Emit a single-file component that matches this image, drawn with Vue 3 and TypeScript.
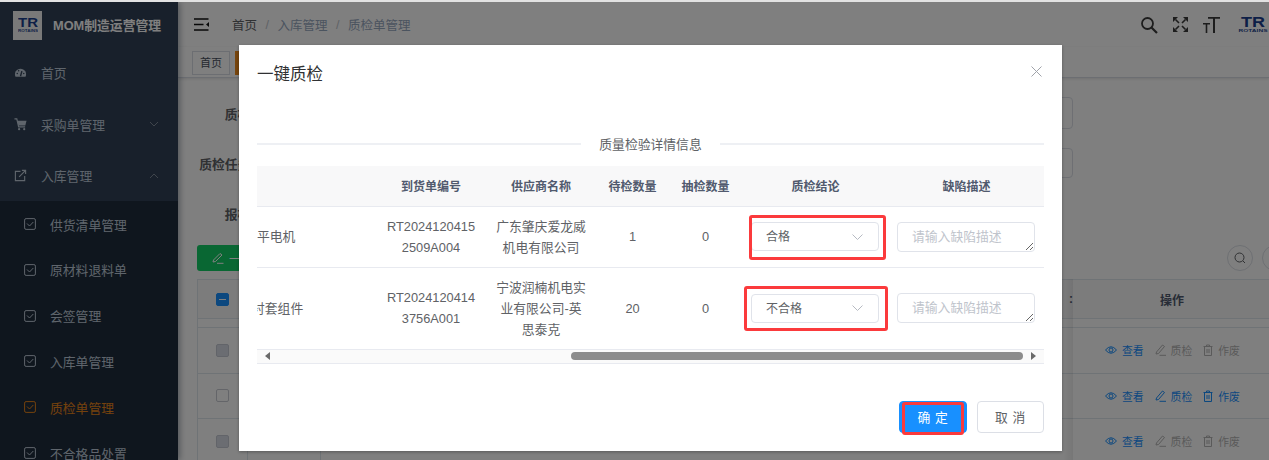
<script setup lang="ts">
const subMenus = [
  { name: '供货清单管理', active: false },
  { name: '原材料退料单', active: false },
  { name: '会签管理', active: false },
  { name: '入库单管理', active: false },
  { name: '质检单管理', active: true },
  { name: '不合格品处置', active: false },
]
const bgRows = [
  { disabled: true, active: false },
  { disabled: false, active: true },
  { disabled: true, active: false },
]
const inspectRows = [
  { name: '平电机', shift: 0, no: 'RT20241204152509A004', supplier: '广东肇庆爱龙威机电有限公司', pending: 1, sample: 0, result: '合格', height: 61, mark: 'mark-one' },
  { name: '衬套组件', shift: -5, no: 'RT20241204143756A001', supplier: '宁波润楠机电实业有限公司-英思泰克', pending: 20, sample: 0, result: '不合格', height: 82, mark: 'mark-two' },
]
</script>

<template>
  <div class="page">
    <div class="strip"></div>
    <div class="stage">
      <aside class="sidebar">
        <div class="brand">
          <div class="brand-logo">
            <svg width="20" height="15" viewBox="0 0 20 15">
              <text x="10" y="9" text-anchor="middle" class="logo-tr" textLength="20" lengthAdjust="spacingAndGlyphs">TR</text>
              <text x="10" y="14" text-anchor="middle" class="logo-sub" textLength="20" lengthAdjust="spacingAndGlyphs">ROTAINS</text>
            </svg>
          </div>
          <span class="brand-title">MOM制造运营管理</span>
        </div>
        <div class="top-item">
          <svg class="top-icon" viewBox="0 0 14 14">
            <path d="M1.600 11.500a6 6 0 1 1 10.800 0z" fill="#bfcbd9" />
            <path d="M7 11 8.500 5.500" stroke="#304156" stroke-width="1.500" />
            <circle cx="3.500" cy="8" r=".8" fill="#304156" /><circle cx="5" cy="5" r=".8" fill="#304156" /><circle cx="10.500" cy="8" r=".8" fill="#304156" />
          </svg>
          <span>首页</span>
        </div>
        <div class="top-item">
          <svg class="top-icon" viewBox="0 0 14 14">
            <path d="M.5 1h2.500L5 9.500h7" stroke="#bfcbd9" stroke-width="1.300" fill="none" />
            <path d="M3.500 3H13.500L12.200 8H4.800z" fill="#bfcbd9" />
            <circle cx="5.500" cy="12" r="1.200" fill="#bfcbd9" /><circle cx="11" cy="12" r="1.200" fill="#bfcbd9" />
          </svg>
          <span>采购单管理</span>
          <svg class="chev" viewBox="0 0 10 6"><path d="M1 1l4 4 4-4" /></svg>
        </div>
        <div class="top-item">
          <svg class="top-icon" viewBox="0 0 14 14">
            <path d="M7 2.500H1.500v10h10V7.500M5.500 8.500 12.500 1.500M8.500 1.500h4v4" stroke="#bfcbd9" stroke-width="1.200" fill="none" />
          </svg>
          <span>入库管理</span>
          <svg class="chev" viewBox="0 0 10 6"><path d="M1 5l4-4 4 4" /></svg>
        </div>
        <div class="submenu">
          <div v-for="m in subMenus" :key="m.name" class="sub-item" :class="{ active: m.active }">
            <svg class="sub-icon" viewBox="0 0 12 12">
              <rect x=".6" y=".6" width="10.800" height="10.800" rx="1.500" />
              <path d="M3 5.500l2.500 2.500 3.800-4" />
            </svg>
            <span>{{ m.name }}</span>
          </div>
        </div>
      </aside>

      <main class="main">
        <header class="topbar">
          <svg class="hamburger" width="15" height="13" viewBox="0 0 15 13">
            <path d="M0 1h14.500M0 6.500h9.500M0 12h14.500" stroke="#111" stroke-width="1.500" />
            <path d="M15 4v5l-3-2.500z" fill="#111" />
          </svg>
          <nav class="crumbs">
            <span class="crumb-home">首页</span><i>/</i><span>入库管理</span><i>/</i><span>质检单管理</span>
          </nav>
          <div class="top-tools">
            <svg width="18" height="18" viewBox="0 0 18 18"><circle cx="7.500" cy="7.500" r="5.500" /><path d="M11.500 11.500 17 17" stroke-width="2.200" /></svg>
            <svg width="17" height="17" viewBox="0 0 17 17">
              <path class="solid" d="M1 1h5L1 6zM16 1v5L11 1zM1 16v-5l5 5zM16 16h-5l5-5z" />
              <path class="tail" d="M3.500 3.500 7 7M13.500 3.500 10 7M3.500 13.500 7 10M13.500 13.500 10 10" />
            </svg>
            <svg width="17" height="18" viewBox="0 0 17 18"><path class="solid" d="M0 7h7v1.500H4.300V17H2.700V8.500H0zM5 1h12v1.700h-5V17h-2V2.700H5z" /></svg>
            <svg class="tool-logo" width="30" height="17" viewBox="0 0 30 17">
              <text x="15" y="11" text-anchor="middle" class="logo-tr logo-big" textLength="24" lengthAdjust="spacingAndGlyphs">TR</text>
              <text x="15" y="16" text-anchor="middle" class="logo-sub" textLength="29" lengthAdjust="spacingAndGlyphs">ROTAINS</text>
            </svg>
          </div>
        </header>
        <div class="tags">
          <span class="tag">首页</span>
          <span class="tag tag-on">质检单管理</span>
        </div>
        <section class="content">
          <div class="form-row first-row">
            <label>质检单号</label><div class="fake-input"></div>
          </div>
          <div class="form-row second-row">
            <label>质检任务编号</label><div class="fake-input short"></div>
          </div>
          <div class="form-row third-row"><label>报检日期</label></div>
          <div class="toolbar">
            <span class="green-btn">
              <svg width="12" height="12" viewBox="0 0 12 12"><path d="M1.500 8 8 1.500l2 1.500-6.500 6.500-2.500.5zM5 11.300h6.500" /></svg>
              一键质检
            </span>
            <div class="round-group">
              <span class="round"><svg width="12" height="12" viewBox="0 0 12 12"><circle cx="5.500" cy="5.500" r="4.500" /><path d="M9 9l2 2" /></svg></span>
              <span class="round"></span>
            </div>
          </div>
          <div class="bg-table">
            <div class="bg-head">
              <span class="check check-on"></span>
              <span class="colon">:</span>
              <span class="ops-title">操作</span>
            </div>
            <div v-for="(r, i) in bgRows" :key="i" class="bg-row">
              <span class="check" :class="{ 'check-off': r.disabled }"></span>
              <span class="cut cut-a"></span><span class="cut cut-b"></span>
              <div class="ops">
                <span class="op">
                  <svg width="12" height="12" viewBox="0 0 12 12"><path d="M.5 6Q6-.5 11.500 6 6 12.500.5 6z" /><circle cx="6" cy="6" r="2" /></svg>查看
                </span>
                <span class="op" :class="{ off: r.disabled }">
                  <svg width="11" height="12" viewBox="0 0 11 12"><path d="M1.500 8 7.500 1l2 1.500-6 7-2.500.5zM4.500 11.300H11" /></svg>质检
                </span>
                <span class="op" :class="{ off: r.disabled }">
                  <svg width="10" height="12" viewBox="0 0 10 12"><path d="M.5 2.500h9M3.500 2.500V1h3v1.500M1.500 2.500v9h7v-9M4 5v4M6 5v4" /></svg>作废
                </span>
              </div>
            </div>
          </div>
        </section>
      </main>

      <div class="overlay"></div>

      <div class="dialog" role="dialog">
        <div class="dialog-head">
          <span class="dialog-title">一键质检</span>
          <svg class="close" width="11" height="11" viewBox="0 0 11 11"><path d="M.5.500l10 10M10.500.500l-10 10" /></svg>
        </div>
        <div class="dialog-body">
          <div class="divider"><span>质量检验详情信息</span></div>
          <table class="grid">
            <colgroup>
              <col style="width:119px" /><col style="width:110px" /><col style="width:110px" /><col style="width:73px" /><col style="width:73px" /><col style="width:147px" /><col style="width:155px" />
            </colgroup>
            <thead>
              <tr>
                <th></th><th>到货单编号</th><th>供应商名称</th><th>待检数量</th><th>抽检数量</th><th>质检结论</th><th>缺陷描述</th>
              </tr>
            </thead>
            <tbody>
              <tr v-for="row in inspectRows" :key="row.no" :style="{ height: row.height + 'px' }">
                <td class="name-cell"><span :style="{ marginLeft: row.shift + 'px' }">{{ row.name }}</span></td>
                <td class="wrap">{{ row.no }}</td>
                <td class="wrap">{{ row.supplier }}</td>
                <td>{{ row.pending }}</td>
                <td>{{ row.sample }}</td>
                <td class="select-cell">
                  <div class="select">
                    <span>{{ row.result }}</span>
                    <svg width="11" height="6" viewBox="0 0 11 6"><path d="M.5.500l5 5 5-5" /></svg>
                  </div>
                  <span class="mark" :class="row.mark"></span>
                </td>
                <td class="area-cell"><textarea placeholder="请输入缺陷描述"></textarea></td>
              </tr>
            </tbody>
          </table>
          <div class="scroller">
            <span class="arrow arrow-l"></span>
            <span class="thumb"></span>
            <span class="arrow arrow-r"></span>
          </div>
        </div>
        <div class="dialog-foot">
          <button class="btn primary"><span class="btn-text">确 定</span><span class="btn-mark"></span></button>
          <button class="btn"><span class="btn-text">取 消</span></button>
        </div>
      </div>
    </div>
  </div>
</template>

<style>
html, body { margin: 0; overflow: hidden; background: #e4e4e4; }
</style>

<style scoped>
.page {
  width: 1269px;
  height: 460px;
  overflow: hidden;
  font-family: "Liberation Sans", "Noto Sans CJK SC", sans-serif;
  font-size: 12.8px;
}
.strip { height: 2px; background: #e2e2e2; }
.stage { position: relative; display: flex; height: 458px; overflow: hidden; background: #fff; }

.logo-tr { font-family: "Liberation Sans", sans-serif; font-weight: 700; font-size: 12px; fill: #1b3f8f; }
.logo-big { font-size: 14px; }
.logo-sub { font-family: "Liberation Sans", sans-serif; font-weight: 700; font-size: 4px; fill: #2a4a8f; }

.sidebar { flex: 0 0 178px; background: #304156; color: #bfcbd9; box-shadow: 2px 0 6px rgba(0,21,41,.35); z-index: 1; }
.brand { height: 45px; display: flex; align-items: center; padding-left: 13px; gap: 11px; }
.brand-logo { width: 29px; height: 29px; margin-top: 1px; background: #f2f2f2; display: flex; align-items: center; justify-content: center; }
.brand-title { font-size: 12.800px; font-weight: 700; color: #fff; white-space: nowrap; }
.top-item { height: 51.400px; display: flex; align-items: center; position: relative; padding-left: 14px; font-size: 12.8px; }
.top-icon { width: 13px; height: 13px; margin-right: 14px; }
.chev { position: absolute; left: 149px; top: 23px; width: 10px; height: 6px; fill: none; stroke: #7f8a98; stroke-width: 1; }
.submenu { background: #1f2d3d; }
.sub-item { height: 45.800px; display: flex; align-items: center; padding-left: 24px; }
.sub-icon { width: 12px; height: 12px; margin-right: 14px; fill: none; stroke: currentColor; stroke-width: 1; }
.sub-item.active { color: #e8841a; }

.main { flex: 1; min-width: 0; display: flex; flex-direction: column; background: #fff; }
.topbar { height: 45px; flex: none; display: flex; align-items: center; padding-left: 16px; }
.hamburger { margin-right: 23px; }
.crumbs { display: flex; align-items: center; color: #97a8be; font-size: 12.500px; }
.crumbs i { font-style: normal; margin: 0 8.500px; color: #c0c4cc; }
.crumb-home { color: #606266; }
.top-tools { margin-left: auto; display: flex; align-items: center; gap: 14px; padding-right: 1px; }
.top-tools svg { fill: none; stroke: #3a3a3a; stroke-width: 1.800; }
.top-tools .solid { fill: #3a3a3a; stroke: none; }
.top-tools .tail { stroke-width: 1.600; }
.top-tools .tool-logo { margin-left: 4px; stroke: none; }
.tags { height: 31px; flex: none; display: flex; align-items: flex-start; gap: 5px; padding: 4px 0 0 14px; border-bottom: 1px solid #d8dce5; box-shadow: 0 1px 3px rgba(0,0,0,.12); box-sizing: border-box; }
.tag { height: 24px; line-height: 22px; box-sizing: border-box; padding: 0 7px; border: 1px solid #d8dce5; font-size: 11px; color: #495060; background: #fff; white-space: nowrap; }
.tag-on { background: #ee8a1a; border-color: #ee8a1a; color: #fff; }

.content { flex: 1; min-height: 0; overflow: hidden; padding-left: 19px; position: relative; }
.form-row { display: flex; align-items: center; }
.form-row label { width: 79px; text-align: right; font-weight: 700; color: #606266; font-size: 12.8px; white-space: nowrap; }
.fake-input { margin-left: auto; width: 240px; margin-right: 196px; height: 32px; box-sizing: border-box; border: 1px solid #dcdfe6; border-radius: 4px; }
.fake-input.short { height: 30px; }
.first-row { margin-top: 19px; }
.second-row { margin-top: 19px; }
.third-row { margin-top: 25px; height: 20px; }
.toolbar { display: flex; align-items: center; justify-content: space-between; margin-top: 22px; height: 26px; }
.green-btn { display: flex; align-items: center; gap: 5px; height: 26px; width: 90px; box-sizing: border-box; padding-left: 15px; background: #13ce66; border-radius: 3px; color: #fff; font-size: 12px; white-space: nowrap; }
.green-btn svg { fill: none; stroke: #fff; stroke-width: 1; }
.round-group { display: flex; gap: 9px; margin-right: -19px; }
.round { width: 26px; height: 26px; flex: none; box-sizing: border-box; border: 1px solid #dcdfe6; border-radius: 50%; display: flex; align-items: center; justify-content: center; }
.round svg { fill: none; stroke: #606266; stroke-width: 1; }
.bg-table { margin-top: 8px; border-left: 1px solid #dfe6ec; position: relative; }
.bg-table::after { content: ""; position: absolute; left: 865px; top: 0; bottom: 0; width: 10px; background: linear-gradient(90deg, rgba(0,0,0,0), rgba(0,0,0,.07)); }
.bg-head { height: 40px; position: relative; display: flex; align-items: center; border-top: 1px solid #dfe6ec; border-bottom: 1px solid #dfe6ec; background: #f8f8f9; margin-bottom: 8px; box-sizing: border-box; font-weight: 700; font-size: 12px; color: #515a6e; }
.check { position: absolute; left: 18px; width: 13px; height: 13px; box-sizing: border-box; border: 1px solid #c8cbd2; border-radius: 2px; background: #fff; }
.check-on { background: #1890ff; border-color: #1890ff; }
.check-on::after { content: ""; position: absolute; left: 2px; right: 2px; top: 5px; height: 1px; background: #fff; }
.check-off { background: #d6dbe5; border-color: #c4c9d3; }
.colon { position: absolute; left: 871px; }
.ops-title { position: absolute; left: 962px; }
.bg-row { height: 45.500px; box-sizing: border-box; position: relative; display: flex; align-items: center; border-top: 1px solid #dfe6ec; }
.cut { position: absolute; top: 0; bottom: 0; width: 1px; background: #dfe6ec; }
.cut-a { left: 49px; }
.cut-b { left: 122px; }
.ops { position: absolute; left: 907px; display: flex; gap: 11px; }
.op { display: flex; align-items: center; gap: 5px; color: #1890ff; font-size: 10.800px; white-space: nowrap; }
.op svg { fill: none; stroke: currentColor; stroke-width: 1; }
.op.off { color: #b4b4b4; }

.overlay { position: absolute; inset: 0; background: rgba(0,0,0,.5); z-index: 2; }

.dialog { position: absolute; z-index: 3; left: 239px; top: 43px; width: 823px; height: 406px; background: #fff; display: flex; flex-direction: column; box-shadow: 0 1px 3px rgba(0,0,0,.3); color: #606266; }
.dialog-head { height: 58px; flex: none; display: flex; align-items: center; justify-content: space-between; padding: 0 20px 0 18px; box-sizing: border-box; }
.dialog-title { font-size: 16.500px; color: #303133; margin-top: -2px; }
.close { fill: none; stroke: #a0a3aa; stroke-width: 1; margin-top: -6px; }
.dialog-body { padding: 0 18px; }
.divider { margin-top: 31px; height: 20px; display: flex; align-items: center; gap: 18px; white-space: nowrap; color: #606266; font-size: 12.8px; }
.divider > span { margin-top: -1px; }
.divider::before, .divider::after { content: ""; flex: 1; height: 2px; background: #eef0f4; }
.grid { margin-top: 12px; width: 787px; table-layout: fixed; border-collapse: collapse; font-size: 12.8px; }
.grid th { height: 40px; padding: 0; background: #f8f8f9; color: #515a6e; font-size: 12px; font-weight: 700; text-align: center; border-bottom: 1px solid #e8eaf0; box-sizing: border-box; }
.grid td { padding: 0; text-align: center; line-height: 21px; border-bottom: 1px solid #e8eaf0; }
.name-cell { text-align: left !important; overflow: hidden; white-space: nowrap; }
.name-cell span { display: inline-block; margin-top: -1px; }
.grid td.wrap { padding: 0 10px; word-break: break-all; }
.select-cell { position: relative; }
.select { width: 128px; height: 29px; margin-left: 9px; box-sizing: border-box; border: 1px solid #e0e3ea; border-radius: 4px; display: flex; align-items: center; justify-content: space-between; padding: 0 15px 0 14px; font-size: 12px; }
.select > span { position: relative; top: 1px; }
.select svg { fill: none; stroke: #b6bac2; stroke-width: 1; }
.mark { position: absolute; box-sizing: border-box; border: 3px solid #fb3a3c; border-radius: 3px; }
.mark-one { left: 7px; top: 8px; width: 137px; height: 45px; }
.mark-two { left: 2px; top: 18px; width: 144px; height: 45px; }
.area-cell textarea { display: block; width: 138px; height: 30px; margin-left: 8px; padding: 5px 14px; box-sizing: border-box; border: 1px solid #e0e3ea; border-radius: 4px; resize: vertical; outline: none; font: inherit; line-height: 18px; color: #606266; background: #fff; overflow: hidden; }
.area-cell textarea::placeholder { color: #c0c4cc; }
.scroller { height: 14px; box-sizing: border-box; position: relative; display: flex; align-items: center; background: #fafafa; border-bottom: 1px solid #e8eaf0; }
.thumb { position: absolute; left: 314px; width: 452px; height: 8px; border-radius: 4px; background: #8c8c8c; }
.arrow { position: absolute; width: 0; height: 0; border-top: 4px solid transparent; border-bottom: 4px solid transparent; }
.arrow-l { left: 8px; border-right: 5px solid #6a6a6a; }
.arrow-r { right: 8px; border-left: 5px solid #6a6a6a; }
.dialog-foot { margin-top: auto; display: flex; justify-content: flex-end; gap: 10px; padding: 0 18px 18px; }
.btn { position: relative; width: 67px; height: 32px; padding: 0; box-sizing: border-box; border: 1px solid #dcdfe6; border-radius: 4px; background: #fff; color: #606266; font: inherit; font-size: 12.8px; letter-spacing: .6px; }
.btn-text { position: relative; top: -1px; }
.btn.primary { width: 68px; background: #1890ff; border-color: #1890ff; color: #fff; }
.btn-mark { position: absolute; left: 2px; top: 0; width: 62px; height: 33px; box-sizing: border-box; border: 3px solid #fb3a3c; border-radius: 3px; }
</style>
